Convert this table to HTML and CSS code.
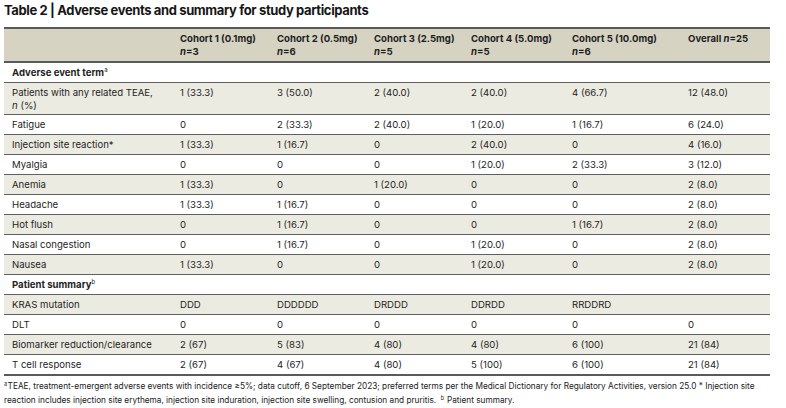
FILE: index.html
```html
<!DOCTYPE html>
<html lang="en">
<head>
<meta charset="utf-8">
<title>Table 2</title>
<link rel="stylesheet" href="styles.css">
</head>
<body>
<div class="page">
  <h1 class="title">Table 2 | Adverse events and summary for study participants</h1>
  <table class="tbl">
    <colgroup>
      <col class="c0"><col class="c1"><col class="c2"><col class="c3"><col class="c4"><col class="c5"><col class="c6">
    </colgroup>
    <thead>
      <tr class="head">
        <th></th>
        <th>Cohort 1 (0.1mg)<br><i>n</i>=3</th>
        <th>Cohort 2 (0.5mg)<br><i>n</i>=6</th>
        <th>Cohort 3 (2.5mg)<br><i>n</i>=5</th>
        <th>Cohort 4 (5.0mg)<br><i>n</i>=5</th>
        <th>Cohort 5 (10.0mg)<br><i>n</i>=6</th>
        <th>Overall <i>n</i>=25</th>
      </tr>
    </thead>
    <tbody>
      <tr class="section"><td colspan="7">Adverse event term<sup>a</sup></td></tr>
      <tr class="alt double"><td>Patients with any related TEAE,<br><i>n</i> (%)</td><td>1 (33.3)</td><td>3 (50.0)</td><td>2 (40.0)</td><td>2 (40.0)</td><td>4 (66.7)</td><td>12 (48.0)</td></tr>
      <tr><td>Fatigue</td><td>0</td><td>2 (33.3)</td><td>2 (40.0)</td><td>1 (20.0)</td><td>1 (16.7)</td><td>6 (24.0)</td></tr>
      <tr class="alt"><td>Injection site reaction*</td><td>1 (33.3)</td><td>1 (16.7)</td><td>0</td><td>2 (40.0)</td><td>0</td><td>4 (16.0)</td></tr>
      <tr><td>Myalgia</td><td>0</td><td>0</td><td>0</td><td>1 (20.0)</td><td>2 (33.3)</td><td>3 (12.0)</td></tr>
      <tr class="alt"><td>Anemia</td><td>1 (33.3)</td><td>0</td><td>1 (20.0)</td><td>0</td><td>0</td><td>2 (8.0)</td></tr>
      <tr><td>Headache</td><td>1 (33.3)</td><td>1 (16.7)</td><td>0</td><td>0</td><td>0</td><td>2 (8.0)</td></tr>
      <tr class="alt"><td>Hot flush</td><td>0</td><td>1 (16.7)</td><td>0</td><td>0</td><td>1 (16.7)</td><td>2 (8.0)</td></tr>
      <tr><td>Nasal congestion</td><td>0</td><td>1 (16.7)</td><td>0</td><td>1 (20.0)</td><td>0</td><td>2 (8.0)</td></tr>
      <tr class="alt"><td>Nausea</td><td>1 (33.3)</td><td>0</td><td>0</td><td>1 (20.0)</td><td>0</td><td>2 (8.0)</td></tr>
      <tr class="section"><td colspan="7">Patient summary<sup>b</sup></td></tr>
      <tr class="alt"><td>KRAS mutation</td><td>DDD</td><td>DDDDDD</td><td>DRDDD</td><td>DDRDD</td><td>RRDDRD</td><td></td></tr>
      <tr><td>DLT</td><td>0</td><td>0</td><td>0</td><td>0</td><td>0</td><td>0</td></tr>
      <tr class="alt"><td>Biomarker reduction/clearance</td><td>2 (67)</td><td>5 (83)</td><td>4 (80)</td><td>4 (80)</td><td>6 (100)</td><td>21 (84)</td></tr>
      <tr class="last"><td>T cell response</td><td>2 (67)</td><td>4 (67)</td><td>4 (80)</td><td>5 (100)</td><td>6 (100)</td><td>21 (84)</td></tr>
    </tbody>
  </table>
  <p class="notes"><sup>a</sup>TEAE, treatment-emergent adverse events with incidence ≥5%; data cutoff, 6 September 2023; preferred terms per the Medical Dictionary for Regulatory Activities, version 25.0 * Injection site reaction includes injection site erythema, injection site induration, injection site swelling, contusion and pruritis.&nbsp; <sup>b</sup> Patient summary.</p>
</div>
</body>
</html>
```

FILE: styles.css
```css
html, body {
  margin: 0;
  padding: 0;
  background: #ffffff;
}

.page {
  width: 770px;
  padding: 2px 0 0 4px;
  font-family: Inter, "Noto Sans", sans-serif;
  color: #1e1e1e;
}

.title {
  margin: 0;
  font-size: 13px;
  line-height: 16px;
  font-weight: 700;
  letter-spacing: -0.38px;
  color: #161616;
}

.tbl {
  margin-top: 9px;
  width: 766px;
  border-collapse: collapse;
  table-layout: fixed;
  font-size: 9.6px;
  line-height: 13px;
}

.c0 { width: 168px; }
.c1 { width: 97px; }
.c2 { width: 97px; }
.c3 { width: 97px; }
.c4 { width: 101px; }
.c5 { width: 116px; }
.c6 { width: 90px; }

.tbl th,
.tbl td {
  text-align: left;
  vertical-align: top;
  padding: 3px 8px 3px 8px;
  font-weight: 400;
}

.head th {
  background: #d6d3c3;
  font-weight: 700;
  border-top: 2px solid #5a5a5a;
  border-bottom: 2px solid #5a5a5a;
  padding-top: 3px;
  padding-bottom: 3px;
}

.tbl tbody tr {
  border-bottom: 1px solid #5f5f5f;
}

.tbl tbody tr.alt {
  background: #ecebe2;
}

.tbl tbody tr.double td {
  padding-bottom: 2px;
}

.tbl tbody tr.section td {
  font-weight: 700;
}

.tbl tbody tr.last {
  border-bottom: 2px solid #5a5a5a;
}

sup {
  font-size: 6px;
  line-height: 0;
  vertical-align: 4px;
  font-weight: 400;
}

.notes {
  width: 760px;
  margin: 3px 0 0 0;
  font-size: 8.25px;
  line-height: 14px;
  color: #222;
}

.notes sup {
  font-size: 5.5px;
  vertical-align: 3px;
  margin-right: 0.5px;
}
```
